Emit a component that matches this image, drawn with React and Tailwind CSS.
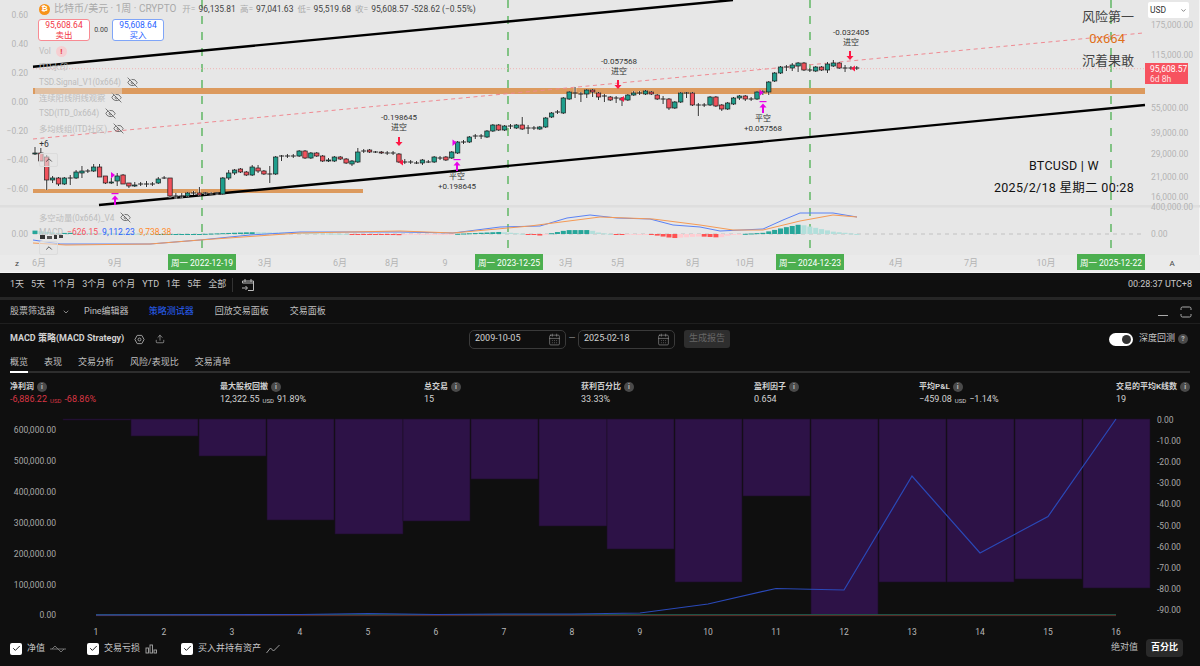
import { Check, ChevronDown, ChevronUp, CalendarDays, EyeOff, Upload } from "lucide-react";

// [open y, close y, high y, low y] in chart pixels, one per week; open === close draws a doji
const CANDLES = [
  ["g",153,154,147,155],["r",153,161,148,161],["r",157,180,155,190],["g",178,180,176,183],["r",178,184,177,186],["g",178,184,177,185],
  ["d",178,178,175,185],["g",172,178,170,179],["g",171,173,166,178],["d",171,171,169,173],["g",167,171,164,172],["r",167,177,164,177],
  ["r",176,183,176,184],["g",182,183,178,184],["g",176,181,173,186],["r",175,184,174,184],["r",183,186,183,188],["g",185,186,182,187],
  ["d",184,184,182,186],["d",184,184,181,187],["d",184,184,182,186],["g",179,183,177,184],["d",178,178,176,179],["r",178,196,178,198],
  ["d",196,196,193,199],["d",196,196,193,198],["g",193,196,192,197],["d",193,193,191,195],["r",193,195,187,196],["d",193,193,192,195],
  ["d",194,194,192,195],["d",193,193,192,195],["g",178,194,177,195],["g",173,178,170,180],["g",170,173,169,175],["r",169,172,168,173],
  ["r",172,175,171,176],["g",167,175,165,176],["r",168,171,165,173],["r",171,174,170,175],["d",174,174,166,183],["g",157,174,156,175],
  ["d",156,156,155,161],["d",156,156,154,158],["d",156,156,154,158],["g",151,156,150,157],["r",151,158,150,159],["g",153,158,152,159],
  ["r",153,156,152,157],["r",156,161,155,162],["g",160,161,158,162],["g",157,161,156,162],["r",157,159,156,160],["r",159,163,158,164],
  ["g",161,164,160,166],["g",152,162,148,163],["d",151,151,149,153],["r",150,152,149,153],["d",152,152,151,153],["r",152,153,151,154],
  ["d",153,153,151,155],["d",153,153,151,155],["r",154,162,153,163],["d",162,162,159,164],["d",162,162,160,164],["d",163,163,161,164],
  ["g",160,163,159,165],["d",162,162,160,163],["g",157,162,156,163],["d",158,158,156,160],["r",157,160,156,161],["g",152,158,151,159],
  ["g",142,153,141,154],["d",142,142,140,144],["g",137,142,136,143],["d",136,136,134,139],["d",136,136,134,139],["g",131,137,130,138],
  ["g",125,131,124,132],["r",125,130,124,131],["g",126,130,125,131],["d",126,126,124,129],["g",125,128,124,129],["r",125,129,117,130],
  ["d",128,128,125,134],["d",128,128,126,130],["g",127,129,126,130],["g",118,127,117,128],["g",113,117,112,118],["d",112,112,110,114],
  ["g",98,113,97,114],["g",92,99,91,100],["d",93,93,87,98],["d",94,94,92,102],["g",90,94,89,98],["r",90,92,89,97],["r",93,97,92,100],
  ["d",96,96,94,102],["r",97,100,96,101],["d",98,98,96,103],["r",98,100,97,106],["g",95,100,94,101],["g",93,95,91,96],["d",93,93,91,95],
  ["g",91,94,90,95],["r",92,94,91,95],["r",95,99,94,100],["d",99,99,96,104],["r",99,108,98,110],["g",102,108,101,109],["g",93,102,92,103],
  ["d",93,93,92,98],["r",93,105,92,106],["d",105,105,103,116],["d",105,105,103,107],["g",97,105,96,106],["r",97,106,96,107],["r",105,109,104,111],
  ["g",103,109,102,110],["g",98,104,97,105],["g",96,98,95,100],["r",96,99,95,101],["d",99,99,97,101],["g",92,99,91,100],["d",92,92,90,95],
  ["g",82,92,81,95],["g",73,81,72,82],["g",67,73,66,74],["d",67,67,65,71],["g",65,68,63,71],["g",63,66,62,72],["r",63,70,62,71],
  ["d",70,70,68,72],["g",67,71,66,72],["r",67,70,66,71],["g",64,70,62,73],["g",63,66,60,67],["r",63,68,62,69],["d",68,68,65,72],["d",68,68,66,70],["d",68,68,66,70],
];

const BLUE = [[33,240],[60,244],[150,244],[200,240],[250,235],[300,232],[400,232],[453,233],[500,227],[540,226],[567,218],[590,215],[617,218],[650,219],[673,225],[700,227],[720,231],[763,229],[783,220],[800,213],[833,213],[857,217]];
const ORANGE = [[33,243],[66,245],[150,244],[200,240],[300,233],[400,231],[453,233],[530,226],[600,217],[653,219],[700,225],[733,230],[763,230],[800,221],[833,215],[857,217]];

const BARS = [[63,131,420],[131,198,436],[199,266,456],[267,334,520],[335,403,534],[403,470,521],[471,538,479],[539,607,526],[607,674,549],[675,742,582],[743,810,496],[811,878,615],[879,946,582],[947,1014,582],[1015,1082,579],[1083,1150,588]];
const EQUITY = [[96,615],[300,614.5],[368,613.5],[436,614.5],[504,614],[572,614],[640,613],[708,604],[776,588.5],[844,590],[912,476],[980,553],[1048,516.5],[1116,419]];

const toPoints = (pts) => pts.map((p) => p.join(",")).join(" ");

function interp(pts, x) {
  for (let i = 1; i < pts.length; i++) {
    if (x <= pts[i][0]) {
      const [x0, y0] = pts[i - 1];
      const [x1, y1] = pts[i];
      return y0 + ((y1 - y0) * (x - x0)) / (x1 - x0);
    }
  }
  return pts[pts.length - 1][1];
}

function Histogram() {
  const bars = [];
  let prev = 0;
  for (let i = 0; i < 141; i++) {
    const x = 35 + i * 5.87;
    const v = (interp(ORANGE, x) - interp(BLUE, x)) * 1.2;
    const color = v >= 0 ? (v >= prev ? "#26a69a" : "#b2dfdb") : v <= prev ? "#ff5252" : "#ffcdd2";
    bars.push(<rect key={i} x={x - 2.5} y={v >= 0 ? 234 - v : 234} width="5" height={Math.max(Math.abs(v), 1)} fill={color} />);
    prev = v;
  }
  return bars;
}

function Candles() {
  return CANDLES.map(([kind, top, bottom, high, low], i) => {
    const x = 35 + i * 5.87;
    const fill = kind === "g" ? "#1f9e8c" : "#f0525c";
    return (
      <g key={i}>
        <line x1={x} x2={x} y1={high} y2={low} stroke="#fff" strokeOpacity="0.7" strokeWidth="2.6" />
        <line x1={x} x2={x} y1={high} y2={low} stroke="#2a2a2a" strokeWidth="1" />
        {kind === "d" ? (
          <line x1={x - 2.5} x2={x + 2.5} y1={top} y2={top} stroke="#222" strokeWidth="1" />
        ) : (
          <rect x={x - 2.2} y={top} width="4.4" height={bottom - top} fill={fill} stroke="#1c1c1c" strokeWidth="0.7" />
        )}
      </g>
    );
  });
}

function CoverArrow({ x, y }) {
  return (
    <g fill="#e800e8">
      <rect x={x - 3.5} y={y} width="7" height="1.2" />
      <polygon points={`${x - 3.5},${y + 6.5} ${x},${y + 2.5} ${x + 3.5},${y + 6.5}`} />
      <rect x={x - 1} y={y + 5} width="2" height="7" />
    </g>
  );
}

function ShortArrow({ x, y }) {
  return (
    <g fill="#ff1744">
      <rect x={x - 1} y={y} width="2" height="7" />
      <polygon points={`${x - 3.5},${y + 5} ${x},${y + 9} ${x + 3.5},${y + 5}`} />
    </g>
  );
}

function TradeLabel({ x, y, lines }) {
  return (
    <text x={x} y={y} fontSize="8" fill="#333" textAnchor="middle">
      <tspan x={x}>{lines[0]}</tspan>
      <tspan x={x} dy="9.5">{lines[1]}</tspan>
    </text>
  );
}

function PriceChart() {
  const left = [["0.60",18],["0.40",47],["0.20",76],["0.00",105],["−0.20",134],["−0.40",163],["−0.60",192]];
  const right = [["175,000.00",28],["115,000.00",58],["55,000.00",111],["39,000.00",136],["29,000.00",157],["21,000.00",180],["16,000.00",200],["0.00",237]];
  const months = [["6月",39],["9月",115],["3月",265],["6月",340],["8月",392],["9",445],["3月",566],["5月",618],["8月",693],["10月",745],["4月",896],["7月",971],["10月",1046]];
  const tags = [["周一 2022-12-19",168],["周一 2023-12-25",475],["周一 2024-12-23",776],["周一 2025-12-22",1077]];

  return (
    <svg className="absolute inset-0" width="1200" height="273" viewBox="0 0 1200 273">
      <rect y="205" width="1200" height="2.5" fill="#dedede" />
      <rect y="255" width="1200" height="17" fill="#eaeaea" />

      {[202, 508, 810, 1111].map((x) => (
        <line key={x} x1={x} x2={x} y1="0" y2="255" stroke="#4caf50" strokeWidth="1.3" strokeDasharray="8 8" />
      ))}

      <rect x="33" y="88" width="1112" height="6" fill="#dc9a5e" />
      <rect x="33" y="189" width="330" height="4" fill="#dc9a5e" />

      <line x1="33" x2="1145" y1="68.7" y2="68.7" stroke="#efb3b3" strokeDasharray="1 2" />
      <line x1="33" x2="1143" y1="139" y2="33" stroke="#f08a92" strokeWidth="1" strokeDasharray="4 3.5" />
      <line x1="33" x2="733" y1="66.7" y2="0" stroke="#000" strokeWidth="2.4" />
      <line x1="99" x2="1145" y1="205" y2="105" stroke="#000" strokeWidth="2.4" />

      <Candles />

      <CoverArrow x={115} y={193} />
      <CoverArrow x={457} y={159} />
      <CoverArrow x={763} y={101} />
      <polygon points="111,172 115,175 111,178.5" fill="#e800e8" />
      <polygon points="452.5,139.5 456.5,142.5 452.5,146" fill="#e800e8" />
      <polygon points="759.5,89.5 763.5,92.5 759.5,96" fill="#e800e8" />
      <polygon points="403,159.5 399,162.5 403,165.5" fill="#ff1744" />
      <polygon points="624,96 620,99 624,102" fill="#ff1744" />
      <polygon points="855,65.5 851,68.5 855,71.5" fill="#ff1744" />
      <ShortArrow x={399} y={137} />
      <ShortArrow x={618} y={80} />
      <ShortArrow x={850} y={51} />

      <text x="44" y="147" fontSize="8.5" fill="#333" textAnchor="middle">+6</text>
      <TradeLabel x={399} y={120} lines={["-0.198645", "进空"]} />
      <TradeLabel x={457} y={179} lines={["平空", "+0.198645"]} />
      <TradeLabel x={619} y={64} lines={["-0.057568", "进空"]} />
      <TradeLabel x={763} y={121} lines={["平空", "+0.057568"]} />
      <TradeLabel x={851} y={35} lines={["-0.032405", "进空"]} />

      <line x1="33" x2="1145" y1="234" y2="234" stroke="#b9b9b9" strokeWidth="0.8" strokeDasharray="4 4" />
      <Histogram />
      <polyline points={toPoints(BLUE)} fill="none" stroke="#5b82f5" strokeWidth="1" />
      <polyline points={toPoints(ORANGE)} fill="none" stroke="#f59a55" strokeWidth="1" />

      <g fontSize="8.5" fill="#b4b4b4" textAnchor="end">
        {left.map(([t, y]) => <text key={y} x="28" y={y}>{t}</text>)}
        <text x="28" y="237">0.00</text>
      </g>
      <g fontSize="8.5" fill="#b4b4b4">
        {right.map(([t, y]) => <text key={y} x="1151" y={y}>{t}</text>)}
        <text x="1151" y="210">400,000.00</text>
      </g>

      <g fontSize="9" fill="#b4b4b4" textAnchor="middle">
        {months.map(([t, x]) => <text key={x} x={x} y="266">{t}</text>)}
        <text x="17" y="266" fill="#444" fontSize="8">z</text>
        <text x="1172" y="266" fill="#444" fontSize="8">A</text>
      </g>
      {tags.map(([t, x]) => (
        <g key={x}>
          <rect x={x} y="254" width="68" height="16" fill="#4caf50" />
          <text x={x + 34} y="265.5" fontSize="8.5" fill="#fff" textAnchor="middle">{t}</text>
        </g>
      ))}

      <g fill="#444" textAnchor="end">
        <text x="1134" y="21" fontSize="13">风险第一</text>
        <text x="1125" y="43" fontSize="13" fill="#e0701a">0x664</text>
        <text x="1134" y="65" fontSize="13">沉着果敢</text>
        <text x="1099" y="170" fontSize="12.5" fill="#111" letterSpacing="0.3">BTCUSD | W</text>
        <text x="1134" y="192" fontSize="12.5" fill="#111" letterSpacing="0.3">2025/2/18 星期二 00:28</text>
      </g>
    </svg>
  );
}

function HiddenIndicator({ name, className }) {
  return (
    <div className={`flex items-center gap-[6px] h-[15.5px] text-[8.3px] leading-none text-[#bdbdbd] ${className || ""}`}>
      <span>{name}</span>
      <EyeOff className="w-[11px] h-[11px] text-[#444]" strokeWidth={1.5} />
    </div>
  );
}

function ChartOverlay() {
  return (
    <>
      <div className="absolute left-[39px] top-[3px] flex items-center gap-[3px] text-[8.5px] leading-[12px] whitespace-nowrap text-[#444]">
        <div className="w-[11px] h-[11px] rounded-full bg-[#f7931a] flex items-center justify-center text-[8px] font-bold text-white mr-[1px]">₿</div>
        <span className="text-[10px] text-[#aaa] mr-[3px]">比特币/美元 · 1周 · CRYPTO</span>
        <span className="text-[#aaa]">开=</span><span className="mr-[1px]">96,135.81</span>
        <span className="text-[#aaa]">高=</span><span className="mr-[1px]">97,041.63</span>
        <span className="text-[#aaa]">低=</span><span className="mr-[1px]">95,519.68</span>
        <span className="text-[#aaa]">收=</span><span>95,608.57</span>
        <span>-528.62 (−0.55%)</span>
      </div>

      <div className="absolute left-[38px] top-[19px] flex items-center">
        <div className="w-[52px] h-[22px] rounded-[3px] border border-[#f88b93] bg-white flex flex-col items-center justify-center text-[8.5px] leading-[10px] text-[#f23645]">
          <span>95,608.64</span><span>卖出</span>
        </div>
        <span className="w-[22px] text-center text-[7px] text-[#444]">0.00</span>
        <div className="w-[52px] h-[22px] rounded-[3px] border border-[#7fa5f8] bg-white flex flex-col items-center justify-center text-[8.5px] leading-[10px] text-[#2962ff]">
          <span>95,608.64</span><span>买入</span>
        </div>
      </div>

      <div className="absolute left-[39px] top-[44px] flex flex-col">
        <div className="flex items-center gap-[5px] h-[15px] text-[8.3px] text-[#bdbdbd]">
          <span>Vol</span>
          <span className="w-[11px] h-[11px] rounded-full bg-[#f6cfd2] text-[#e53945] text-[8px] font-bold leading-[11px] text-center">!</span>
        </div>
        <div className="h-[15.5px] flex items-center text-[8.3px] text-[#bdbdbd]">ITD水印</div>
        <HiddenIndicator name="TSD.Signal_V1(0x664)" />
        <HiddenIndicator name="连续阳线阴线观察" />
        <HiddenIndicator name="TSD(ITD_0x664)" />
        <HiddenIndicator name="多均线组(ITD社区)" />
      </div>
      <div className="absolute left-[35px] top-[88px] w-[87px] h-[6px] bg-[#e6e6e6]/50" />

      <div className="absolute left-[39px] top-[153px] w-[19px] h-[14px] rounded-[2px] border border-[#dcdcdc] bg-[#e6e6e6]/60 flex items-center justify-center">
        <ChevronUp className="w-[10px] h-[10px] text-[#333]" />
      </div>

      <HiddenIndicator name="多空动量(0x664)_V4" className="absolute left-[39px] top-[210px]" />
      <div className="absolute left-[39px] top-[226px] flex items-center gap-[4px] text-[8.5px] leading-[12px] whitespace-nowrap">
        <span className="text-[#bdbdbd]">MACD</span>
        <span className="text-[#f7525f]">−626.15</span>
        <span className="text-[#2962ff]">9,112.23</span>
        <span className="text-[#ff8a2b]">9,738.38</span>
      </div>
      <div className="absolute left-[40px] top-[235px] flex gap-[2px]">
        <span className="w-[5px] h-[4px] bg-[#333]" />
        <span className="w-[5px] h-[3px] mt-[1px] bg-[#555]" />
        <span className="w-[3px] h-[4px] bg-[#333]" />
        <span className="w-[4px] h-[3px] bg-[#444]" />
      </div>
      <div className="absolute left-[39px] top-[241px] w-[19px] h-[14px] rounded-[2px] border border-[#dcdcdc] bg-[#e6e6e6]/60 flex items-center justify-center">
        <ChevronUp className="w-[10px] h-[10px] text-[#333]" />
      </div>

      <div className="absolute left-[1148px] top-[2px] w-[41px] h-[16px] rounded-[2px] bg-white flex items-center justify-between px-[2px] text-[8.5px] text-[#333]">
        <span>USD</span>
        <ChevronDown className="w-[7px] h-[7px]" />
      </div>
      <div className="absolute left-[1145px] top-[63px] w-[43px] h-[21px] bg-[#f7525f] pl-[5px] pt-[1px] flex flex-col text-[8.5px] leading-[10px] text-white">
        <span>95,608.57</span>
        <span className="text-[#ffe0e2]">6d 8h</span>
      </div>
    </>
  );
}

function RangeIcon() {
  return (
    <svg width="14" height="14" viewBox="0 0 14 14" fill="none" stroke="#bbb" strokeWidth="1">
      <path d="M1.5 5V3h11v9.5H7M4 1v3M10 1v3M1.5 5h11M1 10h5M4.5 8l2 2-2 2" />
    </svg>
  );
}

function Info({ mark }) {
  return (
    <span className="inline-flex w-[10px] h-[10px] shrink-0 rounded-full bg-[#4a4a4a] items-center justify-center text-[7px] leading-none font-bold text-[#bbb]">
      {mark || "i"}
    </span>
  );
}

function DateInput({ value }) {
  return (
    <div className="w-[97px] h-[19px] rounded-[5px] border border-[#3a3a3a] flex items-center justify-between pl-[5px] pr-[4px] text-[9px] text-[#d1d1d1]">
      <span>{value}</span>
      <CalendarDays className="w-[13px] h-[13px] text-[#aaa]" strokeWidth={1} />
    </div>
  );
}

function Stat({ label, children }) {
  return (
    <div className="flex flex-col">
      <div className="flex items-center gap-[3px] h-[12px] text-[8px] font-bold text-[#d1d1d1] whitespace-nowrap">
        {label}
        <Info />
      </div>
      <div className="h-[12px] mt-px flex items-center gap-[3px] text-[9px] text-[#d1d1d1] whitespace-nowrap">{children}</div>
    </div>
  );
}

const Unit = ({ children }) => <span className="text-[6px]">{children}</span>;

function EquityChart() {
  const leftAxis = ["600,000.00", "500,000.00", "400,000.00", "300,000.00", "200,000.00", "100,000.00", "0.00"];
  const rightAxis = ["0.00", "-10.00", "-20.00", "-30.00", "-40.00", "-50.00", "-60.00", "-70.00", "-80.00", "-90.00"];
  return (
    <svg className="block shrink-0" width="1200" height="224" viewBox="0 415 1200 224">
      {BARS.map(([x0, x1, y]) => (
        <rect key={x0} x={x0} y="419" width={x1 - x0} height={y - 419} fill="#2d1247" stroke="#1b0f27" strokeWidth="0.6" />
      ))}
      <line x1="96" x2="1116" y1="614.6" y2="614.6" stroke="#1f5a4c" strokeWidth="1" />
      <line x1="96" x2="1116" y1="615.6" y2="615.6" stroke="#5e2f2c" strokeWidth="1" />
      <polyline points={toPoints(EQUITY)} fill="none" stroke="#2a49b8" strokeWidth="1.2" />

      <g fontSize="8.5" fill="#a8a8a8" textAnchor="end">
        {leftAxis.map((t, i) => <text key={t} x="56" y={433 + i * 30.9}>{t}</text>)}
      </g>
      <g fontSize="8.5" fill="#a8a8a8">
        {rightAxis.map((t, i) => <text key={t} x="1157" y={422.5 + i * 21.2}>{t}</text>)}
      </g>
      <g fontSize="8.5" fill="#b8b8b8" textAnchor="middle">
        {Array.from({ length: 16 }, (_, i) => <text key={i} x={96 + i * 68} y="635">{i + 1}</text>)}
      </g>
    </svg>
  );
}

function Checkbox({ label, className, children }) {
  return (
    <div className={`flex items-center gap-[5px] ${className || ""}`}>
      <div className="w-[12px] h-[12px] rounded-[2px] bg-white flex items-center justify-center">
        <Check className="w-[9px] h-[9px] text-[#111]" strokeWidth={2.5} />
      </div>
      <span className="text-[9px] text-[#c8c8c8]">{label}</span>
      {children}
    </div>
  );
}

export default function App() {
  return (
    <div className="w-[1200px] h-[666px] overflow-hidden flex flex-col bg-[#0f0f0f] font-[Roboto,'Noto_Sans_CJK_SC',sans-serif]">

      {/* CHART */}
      <div className="relative h-[272px] shrink-0 bg-[#e7e7e7] border-r border-[#f4f4f4]">
        <PriceChart />
        <ChartOverlay />
      </div>
      <div className="h-px shrink-0 bg-[#f4f4f4]" />

      {/* RANGES */}
      <div className="h-[24px] shrink-0 flex items-center pl-[10px] pr-[8px] text-[9px] text-[#c8c8c8]">
        <div className="flex items-center gap-[7px]">
          {["1天", "5天", "1个月", "3个月", "6个月", "YTD", "1年", "5年", "全部"].map((t) => (
            <span key={t}>{t}</span>
          ))}
        </div>
        <div className="w-px h-[14px] bg-[#333] ml-[6px] mr-[8px]" />
        <RangeIcon />
        <span className="ml-auto">00:28:37 UTC+8</span>
      </div>
      <div className="h-[3px] shrink-0 bg-[#262626]" />

      {/* TABS */}
      <div className="h-[24px] shrink-0 flex items-center pl-[10px] pr-[8px] pt-px text-[9px] text-[#c0c0c0] border-b border-[#1f1f1f]">
        <span>股票筛选器</span>
        <ChevronDown className="w-[8px] h-[8px] ml-[7px] mr-[14px]" />
        <span className="mr-[20px]">Pine编辑器</span>
        <span className="mr-[21px] text-[#2962ff]">策略测试器</span>
        <span className="mr-[21px]">回放交易面板</span>
        <span>交易面板</span>
        <div className="ml-auto flex items-center gap-[12px]">
          <div className="w-[10px] h-px mt-[7px] bg-[#aaa]" />
          <svg width="12" height="12" viewBox="0 0 12 12" fill="none" stroke="#aaa" strokeWidth="1">
            <path d="M1 4V2.5Q1 1 2.5 1h7Q11 1 11 2.5V4M1 8v1.5Q1 11 2.5 11h7q1.5 0 1.5-1.5V8" />
          </svg>
        </div>
      </div>

      {/* STRATEGY HEADER */}
      <div className="h-[30px] shrink-0 flex items-center pl-[10px] pr-[12px]">
        <span className="w-[122px] text-[9px] font-bold text-[#d1d1d1]">MACD 策略(MACD Strategy)</span>
        <svg className="ml-[2px]" width="11" height="11" viewBox="0 0 12 12" fill="none" stroke="#aaa" strokeWidth="1">
          <path d="M3.5 1.5h5L11 6 8.5 10.5h-5L1 6z" />
          <circle cx="6" cy="6" r="1.6" />
        </svg>
        <Upload className="w-[10px] h-[10px] ml-[10px] text-[#bbb]" strokeWidth={1.5} />
        <div className="ml-[304px] flex items-center">
          <DateInput value="2009-10-05" />
          <span className="w-[12px] text-center text-[9px] text-[#888]">—</span>
          <DateInput value="2025-02-18" />
          <div className="ml-[9px] w-[46px] h-[18px] rounded-[3px] bg-[#2e2e2e] flex items-center justify-center text-[9px] text-[#666]">生成报告</div>
        </div>
        <div className="ml-auto flex items-center">
          <div className="relative w-[24px] h-[13px] rounded-full bg-white">
            <span className="absolute right-[2px] top-[2px] w-[9px] h-[9px] rounded-full bg-[#333]" />
          </div>
          <span className="ml-[6px] mr-[3px] text-[9px] text-[#c8c8c8]">深度回测</span>
          <Info mark="?" />
        </div>
      </div>

      {/* SUB TABS */}
      <div className="mx-[10px] shrink-0 flex items-center gap-[16px] h-[17px] text-[9px] text-[#c0c0c0]">
        {["概览", "表现", "交易分析", "风险/表现比", "交易清单"].map((t) => (
          <span key={t}>{t}</span>
        ))}
      </div>
      <div className="mx-[10px] h-[2px] shrink-0 bg-[#2e2e2e]">
        <div className="w-[18px] h-[2px] bg-white" />
      </div>

      {/* STATS */}
      <div className="h-[42px] shrink-0 pl-[10px] pr-[12px] pt-[8px] grid grid-cols-[210px_204px_157px_173px_165px_197px_auto]">
        <Stat label="净利润">
          <span className="flex items-center gap-[3px] text-[#d93644]">-6,886.22 <Unit>USD</Unit> -68.86%</span>
        </Stat>
        <Stat label="最大股权回撤">12,322.55 <Unit>USD</Unit> 91.89%</Stat>
        <Stat label="总交易">15</Stat>
        <Stat label="获利百分比">33.33%</Stat>
        <Stat label="盈利因子">0.654</Stat>
        <Stat label="平均P&L">−459.08 <Unit>USD</Unit> −1.14%</Stat>
        <Stat label="交易的平均K线数">19</Stat>
      </div>

      {/* EQUITY */}
      <EquityChart />

      {/* FOOTER */}
      <div className="flex-1 flex items-start pl-[10px] pr-[17px]">
        <div className="flex items-center pt-[3px]">
          <Checkbox label="净值" className="mr-[21px]">
            <svg width="16" height="10" viewBox="0 0 16 10" fill="none" stroke="#888" strokeWidth="0.8">
              <path d="M0 5h16M2 5l3-3 3 3 3 3 3-3" />
            </svg>
          </Checkbox>
          <Checkbox label="交易亏损" className="mr-[23px]">
            <svg width="13" height="10" viewBox="0 0 13 10" fill="none" stroke="#aaa" strokeWidth="0.9">
              <rect x="1" y="4" width="2.5" height="5" /><rect x="5" y="1" width="2.5" height="8" /><rect x="9" y="6" width="2.5" height="3" />
            </svg>
          </Checkbox>
          <Checkbox label="买入并持有资产">
            <svg width="14" height="10" viewBox="0 0 14 10" fill="none" stroke="#aaa" strokeWidth="0.9">
              <path d="M0.5 9l4-5 3 3 6-6" />
            </svg>
          </Checkbox>
        </div>
        <div className="ml-auto flex items-center gap-[8px] text-[9px] text-[#c0c0c0]">
          <span>绝对值</span>
          <span className="w-[37px] h-[18px] rounded-[4px] bg-[#2a2a2a] flex items-center justify-center font-bold text-white">百分比</span>
        </div>
      </div>
    </div>
  );
}
